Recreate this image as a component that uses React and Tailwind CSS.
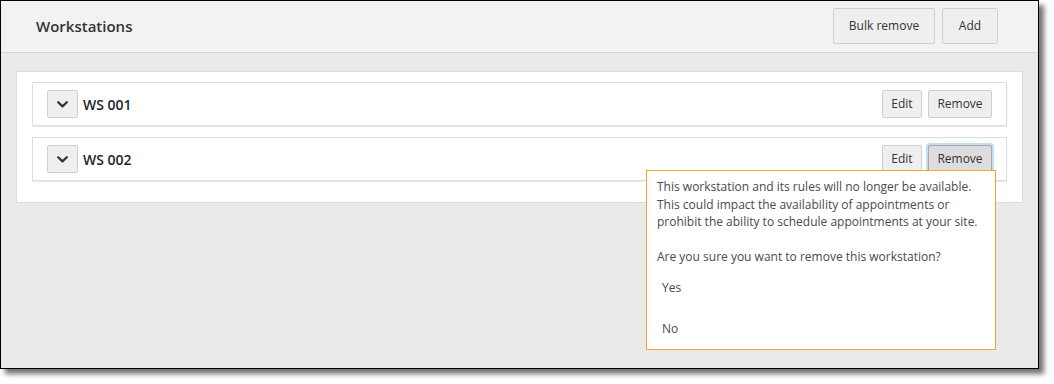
// Workstations settings panel with a remove confirmation popover
import React from 'react';

const font = { fontFamily: '"Open Sans", "Liberation Sans", sans-serif' };

function Chevron() {
  return (
    <svg width="11" height="7" viewBox="0 0 11 7" fill="none">
      <path d="M1.2 1.2 L5.5 5.4 L9.8 1.2" stroke="#333" strokeWidth="2.2" strokeLinecap="round" strokeLinejoin="round" />
    </svg>
  );
}

function SmallButton({ children, active = false, className = '' }) {
  return (
    <button
      className={`h-[28px] rounded-[2px] border text-[12px] text-[#333] ${
        active
          ? 'bg-[#dddddd] border-[#a8a8a8] shadow-[0_0_0_2px_#c4ddf6]'
          : 'bg-[#efefef] border-[#d0d0d0]'
      } ${className}`}
    >
      {children}
    </button>
  );
}

function Row({ name, active = false }) {
  return (
    <div className="h-[44px] flex items-center bg-white border border-[#dedede] shadow-[0_1px_1px_rgba(0,0,0,0.08)] pl-[14px] pr-[14px]">
      <button className="w-[31px] h-[28px] flex items-center justify-center bg-[#efefef] border border-[#d0d0d0] rounded-[2px]">
        <Chevron />
      </button>
      <span className="ml-[5px] text-[14px] font-semibold text-[#1e2532]">{name}</span>
      <div className="ml-auto flex gap-[6px]">
        <SmallButton className="w-[40px]">Edit</SmallButton>
        <SmallButton className="w-[64px]" active={active}>Remove</SmallButton>
      </div>
    </div>
  );
}

function ConfirmPopover() {
  return (
    <div className="absolute left-[645px] top-[169px] w-[350px] h-[180px] bg-white border border-[#f3a52a] text-[12px] text-[#4a4a4a]">
      <div className="pt-[7px] px-[10px] leading-[17.5px]">
        <p>
          This workstation and its rules will no longer be available.
          <br />
          This could impact the availability of appointments or
          <br />
          prohibit the ability to schedule appointments at your site.
        </p>
        <p className="mt-[17.5px]">Are you sure you want to remove this workstation?</p>
      </div>
      <div className="mt-[2px] h-[41px] flex items-center pl-[15px]">Yes</div>
      <div className="h-[41px] flex items-center pl-[15px]">No</div>
    </div>
  );
}

export default function App() {
  return (
    <div className="w-[1054px] h-[384px] bg-white" style={font}>
      <div className="relative w-[1039px] h-[369px] border border-black flex flex-col bg-[#eaeaea] shadow-[5px_5px_5px_rgba(0,0,0,0.55)]">
        {/* Header */}
        <div className="h-[52px] flex items-center justify-between bg-[#f2f2f2] border-b border-[#d4d4d4] pl-[35px] pr-[40px]">
          <h1 className="text-[15px] font-semibold text-[#333]">Workstations</h1>
          <div className="flex gap-[7px] -mt-[2px]">
            <button className="w-[102px] h-[36px] bg-[#efefef] border border-[#d0d0d0] rounded-[2px] text-[12px] text-[#333]">
              Bulk remove
            </button>
            <button className="w-[56px] h-[36px] bg-[#efefef] border border-[#d0d0d0] rounded-[2px] text-[12px] text-[#333]">
              Add
            </button>
          </div>
        </div>

        {/* Body */}
        <div className="flex-1 pt-[18px] pl-[15px] pr-[15px]">
          <div className="bg-white border border-[#dddddd] pt-[10px] pb-[21px] px-[15px] flex flex-col gap-[11px]">
            <Row name="WS 001" />
            <Row name="WS 002" active />
          </div>
        </div>

        <ConfirmPopover />
      </div>
    </div>
  );
}
